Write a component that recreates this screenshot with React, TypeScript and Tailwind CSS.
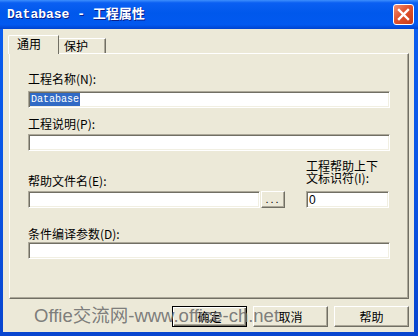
import React from 'react'

const cjk = "font-['Noto_Sans_CJK_SC','Noto_Sans',sans-serif]"

// classic sunken edit box
const Field = ({ className = '', children }: { className?: string; children?: React.ReactNode }) => (
  <div
    className={`h-[17px] flex items-center pl-[1px] bg-white border border-t-[#aca899] border-l-[#aca899] border-b-white border-r-white shadow-[inset_1px_1px_0_#716f64,inset_-1px_-1px_0_#f1efe2] ${className}`}
  >
    {children}
  </div>
)

const Label = ({ children, className = '' }: { children: React.ReactNode; className?: string }) => (
  <div className={`text-[12px] leading-[12px] text-black whitespace-nowrap ${cjk} ${className}`}>{children}</div>
)

const Btn = ({ label, primary }: { label: string; primary?: boolean }) => (
  <button
    className={`w-[75px] h-[21px] flex items-center justify-center text-[12px] leading-[12px] text-black bg-[#ece9d8] ${cjk} ${
      primary
        ? 'border border-black shadow-[inset_1px_1px_0_#fff,inset_-1px_-1px_0_#716f64,inset_-2px_-2px_0_#aca899]'
        : 'border border-t-white border-l-white border-b-[#716f64] border-r-[#716f64] shadow-[inset_-1px_-1px_0_#aca899]'
    }`}
  >
    {label}
  </button>
)

export default function App() {
  return (
    <div className="relative w-[418px] h-[336px] flex flex-col bg-[linear-gradient(to_bottom,#0a5ef0,#0a56e6_50%,#0845cf)] overflow-hidden">
      {/* title bar */}
      <div className="h-[29px] shrink-0 flex items-center justify-between pl-[7px] pr-[4px] bg-[linear-gradient(to_bottom,#3d8ffd_0%,#0a5ff2_10%,#0058ec_45%,#0259f0_85%,#0143cf_100%)]">
        <span className={`text-white text-[13px] font-bold leading-[13px] font-['Liberation_Mono','Noto_Sans_CJK_SC',monospace] [text-shadow:1px_1px_0_#0a1f8a]`}>
          Database - 工程属性
        </span>
        <div className="w-[21px] h-[21px] rounded-[3px] border border-white bg-[linear-gradient(135deg,#f39173,#e0532f_45%,#c73a18)] flex items-center justify-center">
          <svg width="13" height="13" viewBox="0 0 13 13">
            <path d="M2 2 L11 11 M11 2 L2 11" stroke="#fff" strokeWidth="2.4" strokeLinecap="square" />
          </svg>
        </div>
      </div>

      {/* body */}
      <div className="flex-1 ml-[3px] mr-[4px] mb-[4px] bg-[#ece9d8] flex flex-col">
        {/* tabs */}
        <div className="mt-[6px] pl-[5px] h-[18px] flex items-end">
          <div className="relative z-10 -mb-[1px] w-[51px] h-[19px] bg-[#ece9d8] border-l border-t border-white border-r border-r-[#716f64] rounded-tl-[2px] pl-[8px] pt-[2px]">
            <Label>通用</Label>
          </div>
          <div className="w-[47px] h-[15px] bg-[#ece9d8] border-t border-white border-r border-r-[#716f64] shadow-[inset_-1px_0_0_#aca899] pl-[5px] pt-[1px]">
            <Label>保护</Label>
          </div>
        </div>

        {/* panel */}
        <div className="ml-[6px] w-[400px] h-[246px] border border-t-white border-l-white border-r-[#716f64] border-b-[#716f64] shadow-[inset_-1px_-1px_0_#aca899] pt-[19px] pl-[18px]">
          <Label>工程名称(N):</Label>
          <Field className="mt-[6px] w-[362px]">
            <span className="h-[13px] px-[1px] bg-[#316ac5] text-white text-[10px] leading-[13px] font-['Liberation_Mono',monospace]">
              Database
            </span>
          </Field>

          <Label className="mt-[10px]">工程说明(P):</Label>
          <Field className="mt-[4px] w-[362px]" />

          <div className="mt-[9px] flex gap-[21px]">
            <div className="flex flex-col">
              <Label className="mt-[15px]">帮助文件名(E):</Label>
              <div className="mt-[4px] flex">
                <Field className="w-[232px]" />
                <button className="ml-[1px] w-[24px] h-[17px] bg-[#ece9d8] border border-t-white border-l-white border-b-[#716f64] border-r-[#716f64] shadow-[inset_-1px_-1px_0_#aca899] text-[11px] leading-[11px] tracking-[2px] text-black font-['Liberation_Sans',sans-serif]">
                  ...
                </button>
              </div>
            </div>
            <div className="flex flex-col">
              <Label>
                工程帮助上下
                <br />
                文标识符(I):
              </Label>
              <Field className="mt-[7px] w-[83px]">
                <span className="pl-[1px] text-[12px] leading-[12px] text-black font-['Liberation_Sans',sans-serif]">0</span>
              </Field>
            </div>
          </div>

          <Label className="mt-[20px]">条件编译参数(D):</Label>
          <Field className="mt-[2px] w-[362px]" />
        </div>

        {/* dialog buttons */}
        <div className="mt-[7px] flex justify-end gap-[6px] pr-[5px]">
          <Btn label="确定" primary />
          <Btn label="取消" />
          <Btn label="帮助" />
        </div>
      </div>

      {/* site watermark drawn over the dialog */}
      <div className="absolute left-[34px] top-[306px] pointer-events-none text-[18.5px] leading-[19px] text-[#6f6f6f]/90 whitespace-nowrap font-['Liberation_Sans','Noto_Sans_CJK_SC',sans-serif]">
        Offie交流网-www.office-ch.net
      </div>
    </div>
  )
}
